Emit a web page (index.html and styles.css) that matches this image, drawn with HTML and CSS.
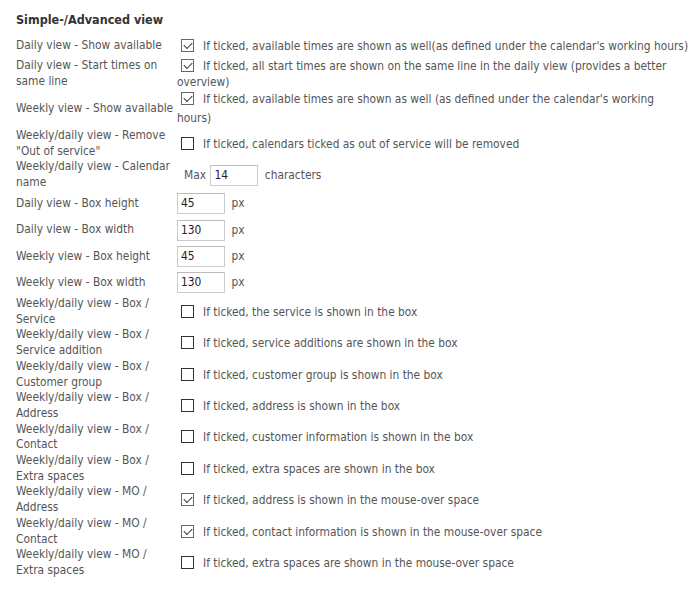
FILE: index.html
```html
<!DOCTYPE html>
<html>
<head>
<meta charset="utf-8">
<link rel="stylesheet" href="styles.css">
</head>
<body>
<div class="panel">
  <h3 class="title">Simple-/Advanced view</h3>
  <div class="settings">
    <div class="row r-first">
      <div class="label">Daily view - Show available</div>
      <div class="ctl"><span class="cb checked"></span>If ticked, available times are shown as well(as defined under the calendar's working hours)</div>
    </div>
    <div class="row">
      <div class="label">Daily view - Start times on same line</div>
      <div class="ctl"><span class="cb checked"></span>If ticked, all start times are shown on the same line in the daily view (provides a better overview)</div>
    </div>
    <div class="row r-tall">
      <div class="label">Weekly view - Show available</div>
      <div class="ctl"><span class="cb checked"></span>If ticked, available times are shown as well (as defined under the calendar's working hours)</div>
    </div>
    <div class="row">
      <div class="label">Weekly/daily view - Remove "Out of service"</div>
      <div class="ctl"><span class="cb"></span>If ticked, calendars ticked as out of service will be removed</div>
    </div>
    <div class="row">
      <div class="label">Weekly/daily view - Calendar name</div>
      <div class="ctl ctl-max">Max <span class="inp inp-max">14</span> characters</div>
    </div>
    <div class="row r-inp">
      <div class="label">Daily view - Box height</div>
      <div class="ctl"><span class="inp">45</span> px</div>
    </div>
    <div class="row r-inp">
      <div class="label">Daily view - Box width</div>
      <div class="ctl"><span class="inp">130</span> px</div>
    </div>
    <div class="row r-inp">
      <div class="label">Weekly view - Box height</div>
      <div class="ctl"><span class="inp">45</span> px</div>
    </div>
    <div class="row r-inp">
      <div class="label">Weekly view - Box width</div>
      <div class="ctl"><span class="inp">130</span> px</div>
    </div>
    <div class="row">
      <div class="label">Weekly/daily view - Box / Service</div>
      <div class="ctl"><span class="cb"></span>If ticked, the service is shown in the box</div>
    </div>
    <div class="row">
      <div class="label">Weekly/daily view - Box / Service addition</div>
      <div class="ctl"><span class="cb"></span>If ticked, service additions are shown in the box</div>
    </div>
    <div class="row">
      <div class="label">Weekly/daily view - Box / Customer group</div>
      <div class="ctl"><span class="cb"></span>If ticked, customer group is shown in the box</div>
    </div>
    <div class="row">
      <div class="label">Weekly/daily view - Box / Address</div>
      <div class="ctl"><span class="cb"></span>If ticked, address is shown in the box</div>
    </div>
    <div class="row">
      <div class="label">Weekly/daily view - Box / Contact</div>
      <div class="ctl"><span class="cb"></span>If ticked, customer information is shown in the box</div>
    </div>
    <div class="row">
      <div class="label">Weekly/daily view - Box / Extra spaces</div>
      <div class="ctl"><span class="cb"></span>If ticked, extra spaces are shown in the box</div>
    </div>
    <div class="row">
      <div class="label">Weekly/daily view - MO / Address</div>
      <div class="ctl"><span class="cb checked"></span>If ticked, address is shown in the mouse-over space</div>
    </div>
    <div class="row">
      <div class="label">Weekly/daily view - MO / Contact</div>
      <div class="ctl"><span class="cb checked"></span>If ticked, contact information is shown in the mouse-over space</div>
    </div>
    <div class="row">
      <div class="label">Weekly/daily view - MO / Extra spaces</div>
      <div class="ctl"><span class="cb"></span>If ticked, extra spaces are shown in the mouse-over space</div>
    </div>
  </div>
</div>
</body>
</html>
```
FILE: styles.css
```css
html, body {
  margin: 0;
  padding: 0;
  background: #fff;
}
body {
  font-family: "DejaVu Sans Condensed", "DejaVu Sans", sans-serif;
  font-size: 11.85px;
  color: #555;
}
.panel {
  padding: 12px 0 0 16px;
}
.title {
  margin: 0 0 7px 0;
  font-size: 12.5px;
  font-weight: bold;
  color: #333;
  line-height: 15px;
}
.settings {
  display: flex;
  flex-direction: column;
}
.row {
  display: grid;
  grid-template-columns: 161px 1fr;
  align-items: center;
  min-height: 31.4px;
}
.r-first {
  min-height: 24px;
}
.r-inp {
  min-height: 26.3px;
}
.label {
  line-height: 15.7px;
}
.ctl {
  line-height: 16px;
  padding-right: 6px;
}
.r-tall .ctl {
  line-height: 19px;
}
.cb {
  display: inline-block;
  width: 11px;
  height: 11px;
  border: 1px solid #333;
  background: #fff;
  vertical-align: -2px;
  margin: 0 9px 0 4px;
  position: relative;
}
.cb.checked {
  border-color: #666;
}
.cb.checked::after {
  content: "";
  position: absolute;
  left: 2px;
  top: 0px;
  width: 7px;
  height: 4px;
  border-left: 1.2px solid #333;
  border-bottom: 1.2px solid #333;
  transform: translate(0, 2px) rotate(-45deg);
  transform-origin: center;
}
.inp {
  display: inline-block;
  box-sizing: border-box;
  width: 48px;
  height: 21px;
  line-height: 19px;
  border: 1px solid #ccc;
  border-top-color: #bbb;
  padding: 0 3px;
  color: #222;
  background: #fff;
  vertical-align: middle;
  margin-right: 3px;
}
.ctl-max {
  padding-left: 7px;
}
.inp-max {
  margin-left: 1px;
}
```
